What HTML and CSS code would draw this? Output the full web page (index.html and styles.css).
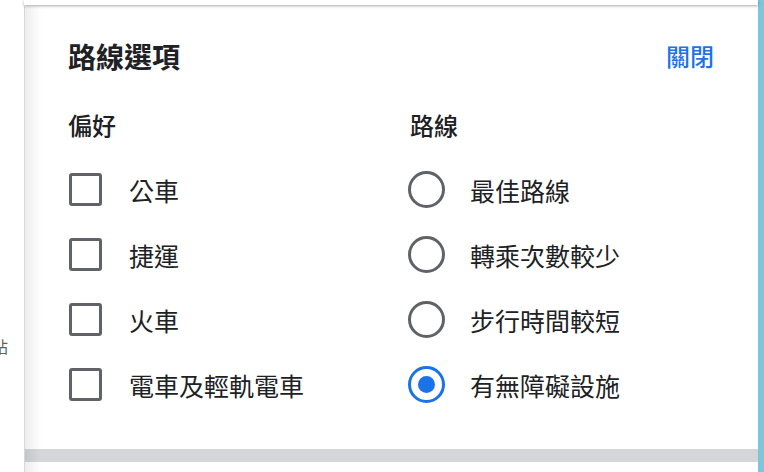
FILE: index.html
```html
<!DOCTYPE html>
<html lang="zh-Hant">
<head>
    <meta charset="UTF-8">
    <meta name="viewport" content="width=device-width, initial-scale=1.0">
    <title>路線選項</title>
    <link rel="stylesheet" href="styles.css">
</head>
<body>

    <div class="side"><span class="side-text">車站</span></div>

    <div class="main">
        <div class="top-card"></div>

        <div class="panel">
            <div class="panel-head">
                <h1>路線選項</h1>
                <a class="close" href="#">關閉</a>
            </div>

            <div class="columns">
                <div class="col">
                    <h2>偏好</h2>
                    <label class="row"><span class="check"></span>公車</label>
                    <label class="row"><span class="check"></span>捷運</label>
                    <label class="row"><span class="check"></span>火車</label>
                    <label class="row"><span class="check"></span>電車及輕軌電車</label>
                </div>
                <div class="col col-right">
                    <h2>路線</h2>
                    <label class="row"><span class="radio"></span>最佳路線</label>
                    <label class="row"><span class="radio"></span>轉乘次數較少</label>
                    <label class="row"><span class="radio"></span>步行時間較短</label>
                    <label class="row"><span class="radio on"></span>有無障礙設施</label>
                </div>
            </div>
        </div>

        <div class="band"></div>
    </div>

    <div class="edge"></div>

</body>
</html>
```

FILE: styles.css
```css
html, body {
    height: 100%;
}
body {
    margin: 0;
    display: flex;
    background: #fff;
    color: #202124;
    font-family: "Noto Sans CJK TC", "Noto Sans", sans-serif;
    overflow: hidden;
}
.side {
    width: 24px;
    flex-shrink: 0;
    overflow: hidden;
    display: flex;
    justify-content: flex-end;
    padding-top: 334px;
    box-sizing: border-box;
}
.side-text {
    white-space: nowrap;
    font-size: 16px;
    line-height: 24px;
    color: #5f6368;
    margin-right: 16px;
}
.main {
    flex: 1;
    position: relative;
    display: flex;
    flex-direction: column;
}
.main::after {
    content: "";
    position: absolute;
    top: 6px;
    left: 0;
    bottom: 0;
    width: 16px;
    border-left: 1px solid #d6d7d9;
    background: linear-gradient(to right, rgba(0, 0, 0, 0.07), rgba(0, 0, 0, 0));
    pointer-events: none;
}
.top-card {
    height: 5px;
    background: #fff;
    box-shadow: 0 1px 3px rgba(0, 0, 0, 0.35);
    position: relative;
    z-index: 1;
}
.panel {
    padding: 33px 44px 32px 44px;
}
.panel-head {
    display: flex;
    justify-content: space-between;
    align-items: center;
}
h1 {
    margin: 0;
    font-size: 28px;
    line-height: 36px;
    font-weight: 700;
}
.close {
    color: #1a73e8;
    text-decoration: none;
    font-size: 24px;
    line-height: 36px;
    font-weight: 500;
}
.columns {
    display: grid;
    grid-template-columns: 340px 1fr;
    margin-top: 36px;
}
h2 {
    margin: 0 0 17px 0;
    font-size: 24px;
    line-height: 30px;
    font-weight: 500;
}
.col-right h2 {
    padding-left: 2px;
}
.row {
    display: flex;
    align-items: center;
    height: 65px;
    font-size: 25px;
    cursor: pointer;
}
.check {
    width: 27px;
    height: 27px;
    border: 3px solid #5f6368;
    border-radius: 3px;
    margin: 0 27px 0 1px;
}
.radio {
    width: 31px;
    height: 31px;
    border: 3px solid #5f6368;
    border-radius: 50%;
    margin-right: 25px;
    display: flex;
    align-items: center;
    justify-content: center;
}
.radio.on {
    border-color: #1a73e8;
}
.radio.on::after {
    content: "";
    width: 17px;
    height: 17px;
    border-radius: 50%;
    background: #1a73e8;
}
.band {
    height: 13px;
    background: #d5d6d9;
}
.edge {
    width: 6px;
    flex-shrink: 0;
    background: #7dc7db;
}
```
